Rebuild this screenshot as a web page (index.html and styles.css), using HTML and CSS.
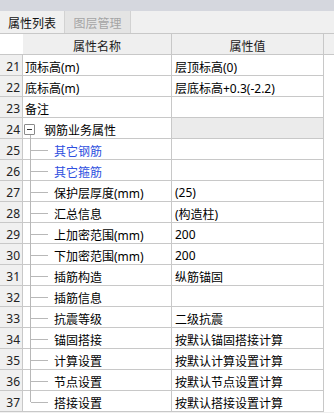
FILE: index.html
```html
<!DOCTYPE html>
<html>
<head>
<meta charset="utf-8">
<link rel="stylesheet" href="styles.css">
</head>
<body>
<div class="app">
  <div class="topbar"></div>
  <div class="tabs">
    <div class="tab active">属性列表</div>
    <div class="tab inactive">图层管理</div>
  </div>
  <div class="grid">
    <div class="row head">
      <div class="c num"></div>
      <div class="c name">属性名称</div>
      <div class="c val">属性值</div>
      <div class="c pad"></div>
    </div>
    <div class="row"><div class="c num">21</div><div class="c name">顶标高(m)</div><div class="c val">层顶标高(0)</div><div class="c pad"></div></div>
    <div class="row"><div class="c num">22</div><div class="c name">底标高(m)</div><div class="c val">层底标高+0.3(-2.2)</div><div class="c pad"></div></div>
    <div class="row"><div class="c num">23</div><div class="c name">备注</div><div class="c val"></div><div class="c pad"></div></div>
    <div class="row"><div class="c num">24</div><div class="c name group"><span class="box"></span>钢筋业务属性</div><div class="c val cat"></div><div class="c pad"></div></div>
    <div class="row"><div class="c num">25</div><div class="c name child blue">其它钢筋</div><div class="c val"></div><div class="c pad"></div></div>
    <div class="row"><div class="c num">26</div><div class="c name child blue">其它箍筋</div><div class="c val"></div><div class="c pad"></div></div>
    <div class="row"><div class="c num">27</div><div class="c name child">保护层厚度(mm)</div><div class="c val">(25)</div><div class="c pad"></div></div>
    <div class="row"><div class="c num">28</div><div class="c name child">汇总信息</div><div class="c val">(构造柱)</div><div class="c pad"></div></div>
    <div class="row"><div class="c num">29</div><div class="c name child">上加密范围(mm)</div><div class="c val">200</div><div class="c pad"></div></div>
    <div class="row"><div class="c num">30</div><div class="c name child">下加密范围(mm)</div><div class="c val">200</div><div class="c pad"></div></div>
    <div class="row"><div class="c num">31</div><div class="c name child">插筋构造</div><div class="c val">纵筋锚固</div><div class="c pad"></div></div>
    <div class="row"><div class="c num">32</div><div class="c name child">插筋信息</div><div class="c val"></div><div class="c pad"></div></div>
    <div class="row"><div class="c num">33</div><div class="c name child">抗震等级</div><div class="c val">二级抗震</div><div class="c pad"></div></div>
    <div class="row"><div class="c num">34</div><div class="c name child">锚固搭接</div><div class="c val">按默认锚固搭接计算</div><div class="c pad"></div></div>
    <div class="row"><div class="c num">35</div><div class="c name child">计算设置</div><div class="c val">按默认计算设置计算</div><div class="c pad"></div></div>
    <div class="row"><div class="c num">36</div><div class="c name child">节点设置</div><div class="c val">按默认节点设置计算</div><div class="c pad"></div></div>
    <div class="row"><div class="c num">37</div><div class="c name child last">搭接设置</div><div class="c val">按默认搭接设置计算</div><div class="c pad"></div></div>
  </div>
  <div class="bottom"></div>
</div>
</body>
</html>
```
FILE: styles.css
```css
html, body {
  margin: 0;
  padding: 0;
  background: #ffffff;
}
.app {
  width: 334px;
  height: 413px;
  overflow: hidden;
  display: flex;
  flex-direction: column;
  font-family: "Noto Sans", "Noto Sans CJK SC", sans-serif;
  font-size: 12px;
  color: #000000;
  background: #ffffff;
}
.topbar {
  height: 11px;
  background: #d5d7de;
  flex: none;
}
.tabs {
  flex: none;
  display: flex;
  background: #f0f0f0;
  border-bottom: 1px solid #c8c8c8;
  box-sizing: border-box;
  height: 23px;
}
.tab {
  height: 22px;
  display: flex;
  align-items: center;
  justify-content: center;
  border-right: 1px solid #d2d2d2;
  box-sizing: border-box;
  padding-top: 1px;
}
.tab.active {
  width: 65px;
  color: #111111;
  background: #f0f0f0;
}
.tab.inactive {
  width: 66px;
  color: #a4a4a4;
  background: #e4e4e4;
}
.grid {
  display: flex;
  flex-direction: column;
  flex: none;
}
.row {
  display: flex;
  height: 21px;
  box-sizing: border-box;
}
.c {
  height: 21px;
  box-sizing: border-box;
  border-bottom: 1px solid #c8c8c8;
  border-right: 1px solid #c8c8c8;
  display: flex;
  align-items: center;
  padding-top: 3px;
  white-space: nowrap;
  position: relative;
}
.num {
  width: 23px;
  background: #f0f0f0;
  justify-content: flex-end;
  padding-right: 2px;
  color: #222222;
}
.name {
  width: 149px;
  padding-left: 2px;
}
.val {
  width: 152px;
  padding-left: 3px;
}
.pad {
  flex: 1;
  border-right: none;
  border-bottom: none;
}
.head .c {
  background: #efefef;
  justify-content: center;
  padding-left: 0;
  color: #1a1a1a;
}
.head .num {
  background: #ffffff;
  border-right: none;
}
.head .pad {
  background: #f0f0f0;
  border-bottom: 1px solid #c8c8c8;
}
.cat {
  background: #ebebeb;
}
.blue {
  color: #2e4fe0;
}
.group {
  padding-left: 21px;
}
.box {
  position: absolute;
  left: 1px;
  top: 6px;
  width: 11px;
  height: 11px;
  box-sizing: border-box;
  border: 1px solid #8a8a8a;
  border-radius: 1px;
  background: #fff;
}
.box::before {
  content: "";
  position: absolute;
  left: 2px;
  top: 4px;
  width: 5px;
  height: 1px;
  background: #333;
}
.group::after {
  content: "";
  position: absolute;
  left: 7px;
  top: 17px;
  bottom: -1px;
  width: 1px;
  background: #b8b8b8;
}
.child {
  padding-left: 31px;
}
.child::before {
  content: "";
  position: absolute;
  left: 7px;
  top: 0;
  bottom: -1px;
  width: 1px;
  background: #b8b8b8;
}
.child.last::before {
  bottom: auto;
  height: 11px;
}
.child::after {
  content: "";
  position: absolute;
  left: 8px;
  top: 11px;
  width: 17px;
  height: 1px;
  background: #b8b8b8;
}
.bottom {
  flex: 1;
  background: #f0f0f0;
}
```
